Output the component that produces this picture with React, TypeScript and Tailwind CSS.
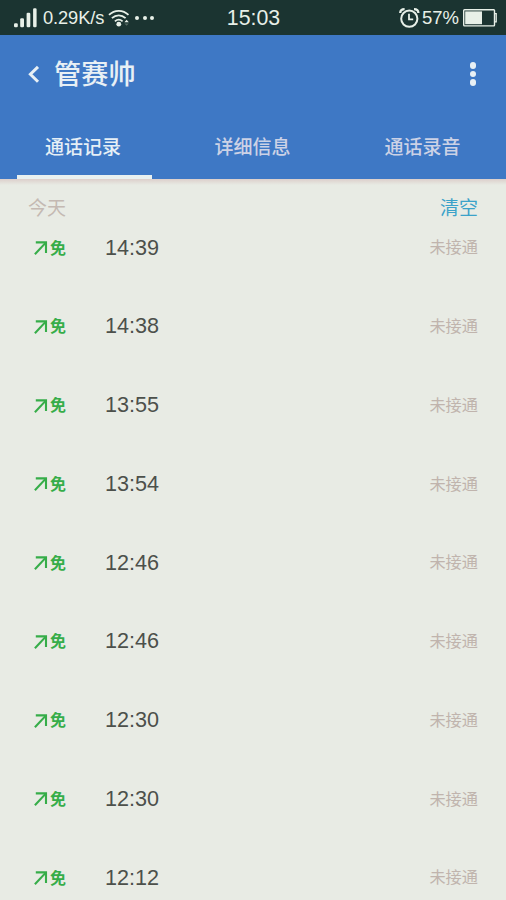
import { useState } from "react";

const TABS = [
  { label: "通话记录", inset: "pr-[3px]" },
  { label: "详细信息", inset: "pr-[1px]" },
  { label: "通话录音", inset: "pl-[2px]" },
];

const CALLS = [
  { id: 1, time: "14:39" },
  { id: 2, time: "14:38" },
  { id: 3, time: "13:55" },
  { id: 4, time: "13:54" },
  { id: 5, time: "12:46" },
  { id: 6, time: "12:46" },
  { id: 7, time: "12:30" },
  { id: 8, time: "12:30" },
  { id: 9, time: "12:12" },
];

function SignalIcon() {
  return (
    <svg width="24" height="20" viewBox="0 0 24 20" fill="currentColor">
      <rect x="0" y="15.2" width="3.8" height="4" rx="1.2" />
      <rect x="6.2" y="10.2" width="3.8" height="9" rx="1.2" />
      <rect x="12.6" y="4.8" width="3.7" height="14.4" rx="1.2" />
      <rect x="19.1" y="0.2" width="3.5" height="19" rx="1.2" />
    </svg>
  );
}

function WifiIcon() {
  return (
    <svg width="22" height="18" viewBox="0 0 22 18" fill="none" stroke="currentColor" strokeWidth="1.8">
      <path d="M1 5.9C6.5 0.4 15 0.4 20.5 5.9" />
      <path d="M3.9 9.2C8 5.3 13.5 5.3 17.6 9.2" />
      <path d="M6.9 12.4C9.3 10.2 12.2 10.2 14.6 12.4" />
      <circle cx="10.8" cy="15.2" r="2.4" fill="currentColor" stroke="none" />
      <path d="M16.4 13.2L18.6 10.8L20.8 13.2Z" fill="currentColor" stroke="none" />
      <path d="M16.4 14.4L18.6 16.8L20.8 14.4Z" fill="#536862" stroke="none" />
    </svg>
  );
}

function AlarmIcon() {
  return (
    <svg width="21" height="20" viewBox="0 0 21 20" fill="none" stroke="currentColor">
      <circle cx="10.3" cy="10.7" r="8.1" strokeWidth="2" />
      <path d="M1.2 5C1.3 2.6 3 1.2 5.6 1.2" strokeWidth="2.3" />
      <path d="M19.4 5C19.3 2.6 17.6 1.2 15 1.2" strokeWidth="2.3" />
      <path d="M10 5.8V11.3H14.2" strokeWidth="1.8" />
    </svg>
  );
}

function BatteryIcon() {
  return (
    <svg width="34" height="18" viewBox="0 0 34 18" fill="none">
      <rect x="0.7" y="0.7" width="30.8" height="16.2" rx="0.8" stroke="currentColor" strokeWidth="1.4" />
      <rect x="2.2" y="2.4" width="16.8" height="12.8" fill="currentColor" />
      <path d="M32 4.6H33.2V12.8H32" stroke="currentColor" strokeWidth="1.3" />
    </svg>
  );
}

function OutgoingIcon() {
  return (
    <svg width="14" height="15" viewBox="0 0 14 15" fill="none" stroke="currentColor" strokeWidth="2.1">
      <path d="M1.8 2.4H12V13" />
      <path d="M0.9 14.2L11.8 2.6" />
    </svg>
  );
}

function StatusBar() {
  return (
    <div className="grid h-[35px] shrink-0 grid-cols-[1fr_auto_1fr] items-center bg-[#1b3431] pt-px pr-[9px] pl-[14px] text-[#e8f0e8]">
      <div className="flex items-center">
        <SignalIcon />
        <span className="ml-[5px] text-[18.3px] leading-none tracking-[-0.1px]">0.29K/s</span>
        <span className="ml-[4px]">
          <WifiIcon />
        </span>
        <span className="ml-[5px] flex gap-[3.5px]">
          <i className="size-[4px] rounded-full bg-current" />
          <i className="size-[4px] rounded-full bg-current" />
          <i className="size-[4px] rounded-full bg-current" />
        </span>
      </div>
      <span className="mr-[4px] pt-px text-[21.3px] leading-none">15:03</span>
      <div className="flex items-center justify-end">
        <AlarmIcon />
        <span className="mr-[4px] ml-[2px] text-[18.5px] leading-none">57%</span>
        <BatteryIcon />
      </div>
    </div>
  );
}

export default function App() {
  const [active, setActive] = useState(0);

  return (
    <div className="flex h-[900px] w-[506px] flex-col overflow-hidden bg-[#e8ebe4] font-['Liberation_Sans','Noto_Sans_CJK_SC',sans-serif]">
      <StatusBar />

      {/* Title and tabs */}
      <header className="flex h-[144px] shrink-0 flex-col bg-[#3e78c5]">
        <div className="flex h-[78px] items-center pr-[30px] pl-[28px] text-[#e8f0f5]">
          <svg width="12" height="18" viewBox="0 0 12 18" fill="none" stroke="currentColor" strokeWidth="3">
            <path d="M10 1.9L2.4 9.3L10 16.7" />
          </svg>
          <h1 className="ml-[14px] pt-[2px] text-[27.2px] leading-none font-medium">管赛帅</h1>
          <button className="ml-auto flex flex-col gap-[2px]">
            <i className="size-[6.4px] rounded-full bg-current" />
            <i className="size-[6.4px] rounded-full bg-current" />
            <i className="size-[6.4px] rounded-full bg-current" />
          </button>
        </div>
        <nav className="flex flex-1 justify-between px-[17px]">
          {TABS.map((tab, i) => (
            <button
              key={tab.label}
              onClick={() => setActive(i)}
              className={
                i === active
                  ? "w-[135px] border-b-4 border-[#e8f0f0] pt-[9px] text-[19px] font-medium text-[#e6eff6]"
                  : "w-[135px] border-b-4 border-transparent pt-[9px] text-[19px] font-medium text-[#ccd2e6]"
              }
            >
              <span className={tab.inset}>{tab.label}</span>
            </button>
          ))}
        </nav>
      </header>
      <div className="h-[6px] shrink-0 bg-linear-to-b from-[#dccfcb] to-[#e8ebe4]" />

      <div className="flex h-[44px] shrink-0 items-center justify-between px-[28px] pt-[4px] text-[19px]">
        <span className="text-[#c4b9b2]">今天</span>
        <button className="text-[#3ba2c9]">清空</button>
      </div>

      {/* Call log */}
      <ul>
        {CALLS.map((call) => (
          <li key={call.id} className="flex h-[78.75px] items-start pr-[28px] pl-[34px]">
            <div className="flex h-[37px] flex-1 items-center">
              <span className="flex w-[71px] items-center gap-[2px] text-[#36ad49]">
                <OutgoingIcon />
                <span className="pt-[2px] text-[16px] leading-none font-bold">免</span>
              </span>
              <span className="text-[21.6px] leading-none text-[#4c504b]">{call.time}</span>
              <span className="ml-auto text-[16.2px] leading-none text-[#c0b4ad]">未接通</span>
            </div>
          </li>
        ))}
      </ul>
    </div>
  );
}
